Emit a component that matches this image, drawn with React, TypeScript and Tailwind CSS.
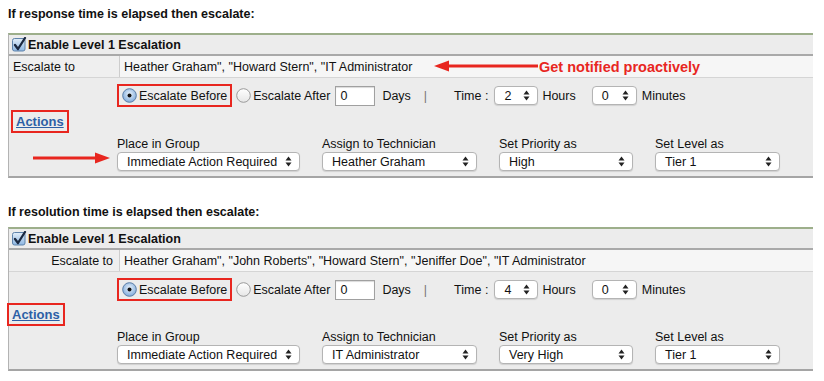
import React from "react";

function Checkbox() {
  return (
    <svg width="15" height="15" viewBox="0 0 15 15" className="shrink-0">
      <defs>
        <linearGradient id="cbg" x1="0" y1="0" x2="0" y2="1">
          <stop offset="0" stopColor="#e3eef9" />
          <stop offset="1" stopColor="#8db6e2" />
        </linearGradient>
      </defs>
      <rect x="0.5" y="1.5" width="12.5" height="12.5" rx="2" fill="url(#cbg)" stroke="#5f83ab" />
      <path d="M3 8 L6 12 L13 1" fill="none" stroke="#1b2840" strokeWidth="2.3" strokeLinecap="round" strokeLinejoin="round" />
    </svg>
  );
}

function Radio({ checked }: { checked?: boolean }) {
  if (checked) {
    return (
      <svg width="15" height="15" viewBox="0 0 15 15" className="shrink-0">
        <defs>
          <radialGradient id="rgc" cx="0.5" cy="0.4" r="0.6">
            <stop offset="0" stopColor="#eaf3fc" />
            <stop offset="1" stopColor="#7ea9da" />
          </radialGradient>
        </defs>
        <circle cx="7.5" cy="7.5" r="6.8" fill="url(#rgc)" stroke="#5b7da6" />
        <circle cx="7.5" cy="7.5" r="2" fill="#111" />
      </svg>
    );
  }
  return (
    <svg width="15" height="15" viewBox="0 0 15 15" className="shrink-0">
      <defs>
        <linearGradient id="rgu" x1="0" y1="0" x2="0" y2="1">
          <stop offset="0" stopColor="#ffffff" />
          <stop offset="1" stopColor="#e6e6e6" />
        </linearGradient>
      </defs>
      <circle cx="7.5" cy="7.5" r="6.8" fill="url(#rgu)" stroke="#9a9a9a" />
    </svg>
  );
}

function Arrows() {
  return (
    <svg width="7" height="11" viewBox="0 0 7 11" className="shrink-0">
      <path d="M0.5 4.5 L3.5 0.5 L6.5 4.5 Z" fill="#222" />
      <path d="M0.5 6.5 L3.5 10.5 L6.5 6.5 Z" fill="#222" />
    </svg>
  );
}

function Select({ value, className }: { value: string; className: string }) {
  return (
    <div
      className={
        "flex h-[19px] items-center justify-between rounded-[4px] border border-[#b4b4b4] bg-white pl-[9px] pr-[7px] shadow-[0_1px_1px_rgba(0,0,0,0.12)] " +
        className
      }
    >
      <span className="leading-[14px]">{value}</span>
      <Arrows />
    </div>
  );
}

type PanelProps = {
  names: string;
  time: string;
  group: string;
  tech: string;
  priority: string;
  level: string;
  rightLabel?: boolean;
  actionsClass: string;
  radioMt: string;
  actionsMt: string;
};

function Panel(p: PanelProps) {
  return (
    <div className="ml-[8px] w-[805px] border-b-2 border-l border-t-2 border-b-[#a5a5a5] border-l-[#b3b3b3] border-t-[#9daf8b] bg-[#ececec]">
      <div className="flex h-[19px] items-center gap-[1px] pl-[3px]">
        <Checkbox />
        <span className="text-[12.5px] font-bold">Enable Level 1 Escalation</span>
      </div>
      <div className="flex h-[24px] border-b border-t-2 border-b-[#d5d5d5] border-t-[#a9a9a9] bg-[#efefef]">
        <div
          className={
            p.rightLabel
              ? "flex w-[110px] items-center justify-end pr-[6px]"
              : "flex w-[110px] items-center pl-[4px]"
          }
        >
          Escalate to
        </div>
        <div className="flex flex-1 items-center border-l border-[#cdcdcd] bg-[#f6f6f6] pl-[4px]">{p.names}</div>
      </div>
      <div className={"flex h-[23px] items-center pl-[108px] " + p.radioMt}>
        <div className="flex h-[23px] items-center gap-[2px] border-2 border-[#e8261f] pl-[3px] pr-[3px]">
          <Radio checked />
          <span>Escalate Before</span>
        </div>
        <div className="ml-[4px] flex items-center gap-[2px]">
          <Radio />
          <span>Escalate After</span>
        </div>
        <div className="ml-[5px] flex h-[20px] w-[40px] items-center border border-[#a0a0a0] bg-white pl-[4px] shadow-[inset_0_1px_1px_rgba(0,0,0,0.15)]">
          0
        </div>
        <span className="ml-[7px]">Days</span>
        <span className="ml-[13px] text-[#777]">|</span>
        <span className="ml-[27px]">Time :</span>
        <Select value={p.time} className="ml-[6px] w-[44px]" />
        <span className="ml-[4px]">Hours</span>
        <Select value="0" className="ml-[16px] w-[45px]" />
        <span className="ml-[5px]">Minutes</span>
      </div>
      <div className={"flex " + p.actionsMt}>
        <div className={"flex h-[23px] items-center border-2 border-[#e8261f] px-[3px] " + p.actionsClass}>
          <a className="text-[13px] font-bold text-[#2d5fa6] underline">Actions</a>
        </div>
      </div>
      <div className="mt-[4px] flex gap-[22px] pb-[5px] pl-[108px]">
        <div className="flex flex-col gap-[1px]">
          <span className="leading-[14px]">Place in Group</span>
          <Select value={p.group} className="w-[183px]" />
        </div>
        <div className="flex flex-col gap-[1px]">
          <span className="leading-[14px]">Assign to Technician</span>
          <Select value={p.tech} className="w-[155px]" />
        </div>
        <div className="flex flex-col gap-[1px]">
          <span className="leading-[14px]">Set Priority as</span>
          <Select value={p.priority} className="w-[134px]" />
        </div>
        <div className="flex flex-col gap-[1px]">
          <span className="leading-[14px]">Set Level as</span>
          <Select value={p.level} className="w-[125px]" />
        </div>
      </div>
    </div>
  );
}

export default function App() {
  return (
    <div
      className="relative h-[381px] w-[824px] overflow-hidden bg-white text-[12.5px] leading-[14px] text-[#111]"
      style={{ fontFamily: '"Liberation Sans", Arial, sans-serif' }}
    >
      <div className="pl-[8px] pt-[7px] font-bold">If response time is elapsed then escalate:</div>
      <div className="mt-[12px]">
        <Panel
          names={'Heather Graham", "Howard Stern", "IT Administrator'}
          time="2"
          group="Immediate Action Required"
          tech="Heather Graham"
          priority="High"
          level="Tier 1"
          actionsClass="ml-[2px]"
          radioMt="mt-[6px]"
          actionsMt="mt-[3px]"
        />
      </div>
      <div className="mt-[27px] pl-[8px] font-bold">If resolution time is elapsed then escalate:</div>
      <div className="mt-[8px]">
        <Panel
          names={'Heather Graham", "John Roberts", "Howard Stern", "Jeniffer Doe", "IT Administrator'}
          time="4"
          group="Immediate Action Required"
          tech="IT Administrator"
          priority="Very High"
          level="Tier 1"
          rightLabel
          actionsClass="ml-[-2px]"
          radioMt="mt-[6px]"
          actionsMt="mt-[2px]"
        />
      </div>

      {/* annotation: top arrow + text */}
      <svg className="absolute left-[434px] top-[60px]" width="104" height="12" viewBox="0 0 104 12">
        <path d="M0 6 L15 0.5 L15 11.5 Z" fill="#e8261f" />
        <rect x="12" y="4.5" width="92" height="3" fill="#e8261f" />
      </svg>
      <div className="absolute left-[539px] top-[59px] text-[14.5px] font-bold leading-[16px] text-[#e8261f]">
        Get notified proactively
      </div>
      {/* annotation: left arrow */}
      <svg className="absolute left-[33px] top-[152px]" width="77" height="12" viewBox="0 0 77 12">
        <rect x="0" y="4.5" width="64" height="3" fill="#e8261f" />
        <path d="M77 6 L62 0.5 L62 11.5 Z" fill="#e8261f" />
      </svg>
    </div>
  );
}
